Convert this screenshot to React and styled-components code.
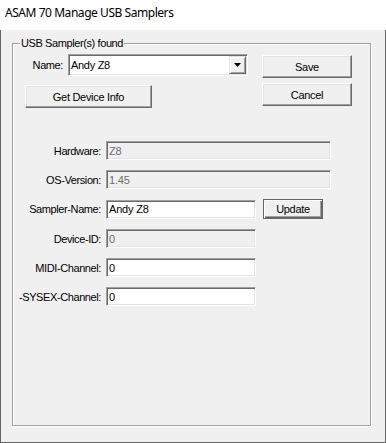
import React from 'react'
import styled, { createGlobalStyle } from 'styled-components'

const Global = createGlobalStyle`
    html, body { margin: 0; padding: 0; background: #f0f0f0; }
    body { font-family: "Liberation Sans", Arial, sans-serif; }
`

const Window = styled.div`
    width: 386px;
    height: 443px;
    display: flex;
    flex-direction: column;
    box-sizing: border-box;
`

const TitleBar = styled.div`
    height: 30px;
    flex: none;
    background: #fff;
    box-sizing: border-box;
    padding: 5px 5px 0;
    font-family: "Noto Sans", "Open Sans", sans-serif;
    font-size: 12px;
    letter-spacing: -0.45px;
    line-height: 16px;
    color: #000;
`

const Body = styled.div`
    flex: 1;
    display: flex;
    flex-direction: column;
    box-sizing: border-box;
    border: 1px solid #646464;
    border-top: none;
    padding: 13px 14px 16px 11px;
    background: #f0f0f0;
`

const Group = styled.div`
    position: relative;
    flex: 1;
    border: 1px solid #a0a0a0;
    box-shadow: 1px 1px 0 #fff, inset 1px 1px 0 #fff;
    padding: 10px 0 0 0;
`

const Legend = styled.span`
    position: absolute;
    top: -8px;
    left: 7px;
    padding: 0 1px;
    background: #f0f0f0;
    font-size: 11px;
    letter-spacing: -0.4px;
    line-height: 14px;
    color: #000;
`

const Top = styled.div`
    display: flex;
    padding-left: 12px;
`

const LeftCol = styled.div`
    width: 223px;
    display: flex;
    flex-direction: column;
`

const RightCol = styled.div`
    display: flex;
    flex-direction: column;
    gap: 5px;
    margin-left: 14px;
    padding-top: 1px;
`

const NameRow = styled.div`
    display: flex;
    align-items: center;
`

const Label = styled.span`
    width: ${p => p.$w}px;
    flex: none;
    text-align: right;
    white-space: nowrap;
    font-size: 11px;
    letter-spacing: -0.4px;
    color: #000;
    margin-right: 5px;
`

const Combo = styled.div`
    width: 180px;
    height: 22px;
    box-sizing: border-box;
    display: flex;
    background: #fff;
    border: 1px solid;
    border-color: #a0a0a0 #fff #fff #a0a0a0;
    box-shadow: inset 1px 1px 0 #696969, inset -1px -1px 0 #e3e3e3;
    padding: 1px;
`

const ComboText = styled.span`
    flex: 1;
    font-size: 11px;
    letter-spacing: -0.3px;
    line-height: 18px;
    padding-left: 1px;
    color: #000;
`

const DropButton = styled.div`
    width: 17px;
    flex: none;
    box-sizing: border-box;
    background: #f0f0f0;
    border: 1px solid;
    border-color: #e3e3e3 #696969 #696969 #e3e3e3;
    box-shadow: inset 1px 1px 0 #fff, inset -1px -1px 0 #a0a0a0;
    display: flex;
    align-items: center;
    justify-content: center;
`

const Button = styled.button`
    width: ${p => p.$w}px;
    height: ${p => p.$h || 23}px;
    box-sizing: border-box;
    padding: 0;
    background: #f0f0f0;
    font-family: "Liberation Sans", Arial, sans-serif;
    font-size: 11px;
    letter-spacing: -0.3px;
    color: #000;
    border: 1px solid;
    border-color: #fff #696969 #696969 #fff;
    box-shadow: inset -1px -1px 0 #a0a0a0, inset 1px 1px 0 #e3e3e3;
    ${p => p.$default && `
        border: 1px solid #646464;
        box-shadow: inset 1px 1px 0 #fff, inset -1px -1px 0 #696969, inset -2px -2px 0 #a0a0a0;
    `}
`

const GetInfo = styled(Button)`
    margin-top: 9px;
`

const Fields = styled.div`
    display: flex;
    flex-direction: column;
    gap: 10px;
    margin-top: 33px;
`

const Row = styled.div`
    display: flex;
    align-items: center;
`

const Field = styled.input`
    width: ${p => p.$w}px;
    height: 19px;
    box-sizing: border-box;
    margin: 0;
    padding: 0 2px;
    font-family: "Liberation Sans", Arial, sans-serif;
    font-size: 11px;
    letter-spacing: -0.2px;
    background: ${p => (p.disabled ? '#f0f0f0' : '#fff')};
    color: ${p => (p.disabled ? '#6d6d6d' : '#000')};
    -webkit-text-fill-color: ${p => (p.disabled ? '#6d6d6d' : '#000')};
    opacity: 1;
    outline: none;
    border: 1px solid;
    border-color: #a0a0a0 #fff #fff #a0a0a0;
    box-shadow: inset 1px 1px 0 #696969, inset -1px -1px 0 #e3e3e3;
`

const SideButton = styled(Button)`
    margin-left: 7px;
`

const fields = [
    { label: 'Hardware:', value: 'Z8', w: 225, disabled: true },
    { label: 'OS-Version:', value: '1.45', w: 225, disabled: true },
    { label: 'Sampler-Name:', value: 'Andy Z8', w: 150, button: 'Update' },
    { label: 'Device-ID:', value: '0', w: 150, disabled: true },
    { label: 'MIDI-Channel:', value: '0', w: 150 },
    { label: '-SYSEX-Channel:', value: '0', w: 150 },
]

export default function App() {
    return (
        <Window>
            <Global />
            <TitleBar>ASAM 70 Manage USB Samplers</TitleBar>
            <Body>
                <Group>
                    <Legend>USB Sampler(s) found</Legend>
                    <Top>
                        <LeftCol>
                            <NameRow>
                                <Label $w={38}>Name:</Label>
                                <Combo>
                                    <ComboText>Andy Z8</ComboText>
                                    <DropButton>
                                        <svg width="7" height="4" viewBox="0 0 7 4">
                                            <path d="M0 0h7L3.5 4z" fill="#000" />
                                        </svg>
                                    </DropButton>
                                </Combo>
                            </NameRow>
                            <GetInfo $w={127}>Get Device Info</GetInfo>
                        </LeftCol>
                        <RightCol>
                            <Button $w={90}>Save</Button>
                            <Button $w={90}>Cancel</Button>
                        </RightCol>
                    </Top>
                    <Fields>
                        {fields.map(f => (
                            <Row key={f.label}>
                                <Label $w={88}>{f.label}</Label>
                                <Field $w={f.w} defaultValue={f.value} disabled={f.disabled} readOnly />
                                {f.button && (
                                    <SideButton $w={60} $h={20} $default>
                                        {f.button}
                                    </SideButton>
                                )}
                            </Row>
                        ))}
                    </Fields>
                </Group>
            </Body>
        </Window>
    )
}
